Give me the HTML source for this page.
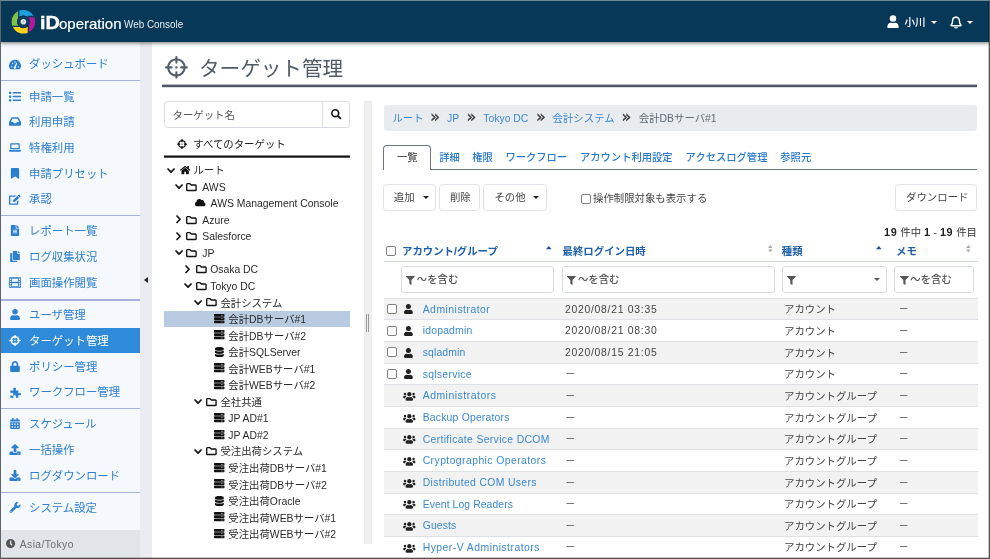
<!DOCTYPE html>
<html lang="ja">
<head>
<meta charset="utf-8">
<title>iDoperation Web Console</title>
<style>
*{box-sizing:border-box;margin:0;padding:0}
html,body{width:990px;height:559px;overflow:hidden;background:#fff}
body{position:relative;font-family:"Liberation Sans","Noto Sans CJK JP",sans-serif;font-size:10.4px;color:#333;will-change:transform}
.abs{position:absolute}
svg{display:block;overflow:visible}
/* frame */
#frame{position:absolute;left:0;top:0;width:990px;height:559px;border:1px solid #5e6468;border-top-color:#6f8795;border-bottom-color:#505050;border-right-color:#555;box-shadow:inset 0 -1px 0 rgba(0,0,0,.2),inset -1px 0 0 rgba(0,0,0,.22);z-index:50;pointer-events:none}
/* header */
#hdr{position:absolute;left:0;top:0;width:990px;height:42px;background:#073858;box-shadow:0 1px 4px rgba(0,0,0,.55);z-index:10;color:#fff}
#brand{position:absolute;left:39.800px;top:12px;font-size:17.700px;line-height:22px;color:#fff;white-space:nowrap;font-weight:bold;transform:scaleX(1.120);transform-origin:0 0;-webkit-text-stroke:.35px #fff}
#brand1{position:absolute;left:59px;top:13px;font-size:15px;line-height:22px;color:#fff;white-space:nowrap;-webkit-text-stroke:.2px #fff}
#brand2{position:absolute;left:124px;top:17.400px;font-size:10.800px;line-height:14px;color:#e6edf1;white-space:nowrap;transform:scaleX(.915);transform-origin:0 0}
.hname{position:absolute;left:904.500px;top:15px;font-size:10.600px;line-height:14px;color:#fff;font-weight:500;font-family:"Liberation Sans","Noto Sans CJK JP",sans-serif}
.caret{position:absolute;width:0;height:0;border-left:3.2px solid transparent;border-right:3.2px solid transparent;border-top:3.4px solid #fff}
/* sidebar */
#side{position:absolute;left:0;top:42px;width:140px;height:517px;background:#f5f8fd}
#split{position:absolute;left:140px;top:42px;width:12px;height:517px;background:#eaecf2}
.mi{position:absolute;left:0;width:140px;height:25.700px;line-height:25.200px;padding-top:1px;font-size:11.400px;color:#2f80d0;padding-left:29px;white-space:nowrap;font-family:"Liberation Sans","Noto Sans CJK JP",sans-serif;font-weight:400}
.mi svg{position:absolute;left:9px;top:7.3px;width:12px;height:11px;fill:#2b7fd0}
.mi.act{background:#2f8ad9;color:#fff}
.mi.act svg{fill:#fff}
.sep{position:absolute;left:0;width:140px;height:1.300px;background:#a9b0dc}
#tz{position:absolute;left:0;top:530px;width:140px;height:29px;background:#e1e4e9;color:#6c6c6c;font-size:10.300px;line-height:29px;padding-left:19.800px;letter-spacing:.42px}
#tz svg{position:absolute;left:6.200px;top:9.300px;width:9.200px;height:9.200px;fill:#555}

/* main */
#title{position:absolute;left:199px;top:52px;font-size:20.600px;line-height:34px;color:#505b66;white-space:nowrap;font-family:"Liberation Sans","Noto Sans CJK JP",sans-serif;font-weight:400}
#tline{position:absolute;left:161.600px;top:84px;width:815.400px;height:4px;background:linear-gradient(to bottom,rgba(78,89,101,.4) 0,rgba(78,89,101,.4) 25%,#4e5965 25%,#4e5965 75%,rgba(78,89,101,.22) 75%,rgba(78,89,101,.22) 100%)}
#sbox{position:absolute;left:163.500px;top:100.500px;width:186.500px;height:27px;border:1px solid #d9dde3;border-radius:3.500px;background:#fff}
#sbox .dv{position:absolute;left:157px;top:0;width:1px;height:25px;background:#dfe2e6}
#sbox .ph{position:absolute;left:8px;top:1px;line-height:25px;font-size:10.400px;color:#555;font-family:"Liberation Sans","Noto Sans CJK JP",sans-serif}
#allt{position:absolute;left:193.300px;top:135px;line-height:19px;font-size:10.400px;color:#222;white-space:nowrap;font-family:"Liberation Sans","Noto Sans CJK JP",sans-serif}
#bline{position:absolute;left:163.600px;top:155px;width:186.600px;height:3px;background:linear-gradient(#888 0,#888 33%,#111 33%,#111 67%,#555 67%,#555 100%)}
.tr{position:absolute;left:163.600px;width:186.400px;height:16.200px}
.tr.sel{background:#b9cbe0}
.tr span{position:absolute;top:1.500px;line-height:16px;font-size:10.400px;color:#2a2a2a;white-space:nowrap}
.tr svg{position:absolute;fill:#111}
.tr svg.ck{fill:none;stroke:#111;stroke-width:1.700;stroke-linecap:round;stroke-linejoin:round}
.tr svg.fk{fill:none;stroke:#111;stroke-width:1.350;stroke-linejoin:round}
#tsplit{position:absolute;left:364.400px;top:100.500px;width:7.800px;height:443.300px;background:#eeeeef}
#tsplit i{position:absolute;top:213px;width:1px;height:18px;background:#999}
/* right */
#bc{position:absolute;left:383.600px;top:104.800px;width:593.400px;height:26px;background:#e9ecef;border-radius:3px}
#bc span{position:absolute;top:0;line-height:28px;font-size:10.400px;white-space:nowrap;color:#3d88d0}
#bc span.g{color:#5f6871}
#bc span.q{color:#3a3a3a;font-size:16px;line-height:24px;font-weight:normal;font-family:"DejaVu Sans","Liberation Sans",sans-serif;margin-left:-.5px;-webkit-text-stroke:.3px #3a3a3a}
#tabline{position:absolute;left:383.500px;top:168.800px;width:593.500px;height:1px;background:#70777e}
#tab1{position:absolute;left:383.300px;top:145px;width:47.400px;height:25px;border:1px solid #70777e;border-bottom:0;border-radius:4px 4px 0 0;background:#fff}
.tb{position:absolute;top:147px;line-height:22px;font-size:10.300px;white-space:nowrap;color:#2a7acb;font-weight:500;font-family:"Liberation Sans","Noto Sans CJK JP",sans-serif}
.btn{position:absolute;top:184.300px;height:26.500px;border:1px solid #dfe2e8;border-radius:3.500px;background:#fff;font-size:10.400px;line-height:24px;color:#444;white-space:nowrap;font-family:"Liberation Sans","Noto Sans CJK JP",sans-serif}
.btn span{position:absolute;top:1px}
.cdk{position:absolute;width:0;height:0;border-left:3px solid transparent;border-right:3px solid transparent;border-top:3.200px solid #222}
.cb{position:absolute;width:10px;height:10px;border:1px solid #808080;border-radius:2px;background:#fff}
.t{position:absolute;white-space:nowrap}
#cnt{position:absolute;left:860px;width:117px;text-align:right;top:224px;line-height:17px;font-size:10.400px;color:#333;white-space:nowrap}
#cnt b{color:#222;font-size:10.800px;letter-spacing:.7px}
.th{position:absolute;top:243.300px;line-height:18px;font-size:10.400px;color:#1d5fa8;font-weight:bold;white-space:nowrap;font-family:"Liberation Sans","Noto Sans CJK JP",sans-serif}
#hline{position:absolute;left:383.500px;top:261px;width:594.500px;height:1px;background:#cfd6e6}
.fi{position:absolute;top:266.300px;height:26.700px;border:1px solid #d9dde2;border-radius:3px;background:#fff}
.fi svg{position:absolute;left:4.600px;top:8.300px;width:8.800px;height:9px;fill:#555}
.fi span{position:absolute;left:15.200px;top:1px;line-height:24px;font-size:10.400px;color:#555;font-weight:500;font-family:"Liberation Sans","Noto Sans CJK JP",sans-serif}
.row{position:absolute;left:383.500px;width:594.500px;height:21.650px;border-top:1px solid #dee2e6}
.row.o{background:#f2f2f2}
.row span{position:absolute;top:0;line-height:21px;font-size:10.400px;color:#444;white-space:nowrap}
.row span.lk{left:39.200px;color:#3b88d0;letter-spacing:.3px}
.row span.dt{left:181.500px;letter-spacing:.72px}
.row span.ds{left:181.500px;top:-.5px}
.row span.ty{left:400.500px;top:.5px;font-family:"Liberation Sans","Noto Sans CJK JP",sans-serif}
.row span.mm{left:515px;top:-.5px}
.row svg{position:absolute;fill:#222}
.row .cb{left:3.700px;top:5.400px}
</style>
</head>
<body>
<!-- HEADER -->
<div id="hdr">
  <svg class="abs" style="left:0;top:0;width:48px;height:42px" viewBox="0 0 48 42">
    <defs><clipPath id="ring"><path clip-rule="evenodd" d="M11.600 21.800a11.800 11.800 0 1 0 23.600 0a11.800 11.800 0 1 0 -23.600 0zM17 21.800a6.400 6.400 0 1 0 12.800 0a6.400 6.400 0 1 0 -12.800 0z"/></clipPath></defs>
    <g clip-path="url(#ring)">
      <rect x="10" y="8" width="8.400" height="18.300" fill="#7dc242"/>
      <rect x="18.400" y="8" width="20" height="8.600" fill="#1ea0e0"/>
      <rect x="28.600" y="16.600" width="10" height="20" fill="#b3189a"/>
      <rect x="10" y="26.300" width="18.600" height="10" fill="#fcd116"/>
    </g>
    <g stroke="#073858" stroke-width="1.300" fill="none">
      <path d="M18.700 8v10M28.400 26v10M28 16.500h10M10 26.400h10"/>
    </g>
    <circle cx="23.400" cy="21.800" r="6.300" fill="#073858"/><circle cx="23.400" cy="21.800" r="4.400" fill="none" stroke="#0b4162" stroke-width="1.800"/>
    <circle cx="23.400" cy="21.800" r="2.800" fill="#dde1e4"/>
    <circle cx="23.400" cy="21.800" r=".8" fill="#b0a8a8"/>
  </svg>
  <div id="brand">iD</div><div id="brand1">operation</div>
  <div id="brand2">Web Console</div>
  <svg class="abs" style="left:887px;top:15px;width:12px;height:13px" viewBox="0 0 14 16" fill="#fff"><circle cx="7" cy="4.2" r="4"/><path d="M0 15.2c0-3.6 1.8-5.6 4.2-5.6l.6 0c.7.3 1.400.5 2.200.5s1.500-.2 2.200-.5l.6 0c2.400 0 4.200 2 4.200 5.600c0 .5-.4.800-.9.800H.9c-.5 0-.9-.3-.9-.8z"/></svg>
  <div class="hname">小川</div>
  <div class="caret" style="left:931px;top:20.500px"></div>
  <svg class="abs" style="left:949.500px;top:14.500px;width:12px;height:14px" viewBox="0 0 14 16" fill="none" stroke="#fff" stroke-width="1.700"><path d="M7 1.300v1.200M7 2.500c-2.400 0-4 1.900-4 4.300c0 2.700-.7 3.700-1.700 4.700c-.3.300-.1.800.3.800h10.800c.4 0 .6-.5.300-.8c-1-1-1.700-2-1.700-4.700c0-2.400-1.600-4.300-4-4.300z"/><path d="M5.400 13.700c.2.800.8 1.300 1.600 1.300s1.400-.5 1.600-1.300" stroke-width="1.400"/></svg>
  <div class="caret" style="left:966.600px;top:20.500px"></div>
</div>

<!-- SIDEBAR -->
<div id="side"></div>
<div class="mi" style="top:51.300px"><svg viewBox="0 0 18 16"><path fill-rule="evenodd" d="M9 1a9 9 0 0 0-7.800 13.500c.2.300.5.500.9.500h13.800c.4 0 .7-.2.900-.5A9 9 0 0 0 9 1zm0 2.200a1 1 0 1 1 0 2a1 1 0 0 1 0-2zM4 12.500a1 1 0 1 1 0-2a1 1 0 0 1 0 2zm1.500-5a1 1 0 1 1 0-2a1 1 0 0 1 0 2zm6.800-1.300l-2 5.300a1.800 1.800 0 1 1-2.300-.5l2.900-5.300c.4-.7 1.700-.3 1.400.5zM14 12.500a1 1 0 1 1 0-2a1 1 0 0 1 0 2z"/></svg>ダッシュボード</div>
<div class="mi" style="top:83.6px"><svg viewBox="0 0 16 14"><rect x="0" y="0.500" width="3" height="3" rx=".5"/><rect x="0" y="5.500" width="3" height="3" rx=".5"/><rect x="0" y="10.500" width="3" height="3" rx=".5"/><rect x="5" y="1" width="11" height="2" rx=".5"/><rect x="5" y="6" width="11" height="2" rx=".5"/><rect x="5" y="11" width="11" height="2" rx=".5"/></svg>申請一覧</div>
<div class="mi" style="top:109.2px"><svg viewBox="0 0 18 14"><path d="M17.800 7.400L14.500 1.400C14.200.9 13.700.6 13.100.6H4.900c-.6 0-1.100.3-1.400.8L.2 7.400c-.1.300-.2.600-.2.900v3.600c0 .9.700 1.500 1.500 1.500h15c.8 0 1.500-.6 1.500-1.500V8.300c0-.3-.1-.6-.2-.9zM5.200 2.800h7.600l2.600 5h-3.700l-1 2H7.300l-1-2H2.600z"/></svg>利用申請</div>
<div class="mi" style="top:135.0px"><svg viewBox="0 0 20 16"><path d="M3.500 1h13c.8 0 1.500.7 1.500 1.500V11H2V2.500C2 1.700 2.700 1 3.500 1zM4 3v6h12V3zM0 12h20v.8c0 1.200-1 2.200-2.200 2.200H2.200C1 15 0 14 0 12.800z"/></svg>特権利用</div>
<div class="mi" style="top:160.7px"><svg viewBox="0 0 12 16"><path d="M0 16V1.500C0 .7.700 0 1.500 0h9c.8 0 1.500.7 1.500 1.500V16l-6-3.500z"/></svg>申請プリセット</div>
<div class="mi" style="top:186.3px"><svg viewBox="0 0 18 16"><path d="M12.600 2.600l2.800 2.800-6.100 6.100-2.500.3c-.3 0-.6-.3-.6-.6l.3-2.500zM17.100 2.200L15.800.9c-.4-.4-1.100-.4-1.500 0l-1.200 1.200 2.800 2.800 1.200-1.200c.4-.4.400-1.100 0-1.500zM12 10.800v3.200H2V4h7.200l2-2H1.500C.7 2 0 2.700 0 3.500v11c0 .8.700 1.500 1.500 1.500h11c.8 0 1.500-.7 1.500-1.500V8.800z"/></svg>承認</div>
<div class="mi" style="top:218.2px"><svg viewBox="0 0 12 16"><path fill-rule="evenodd" d="M7 4.300V0H.8C.3 0 0 .3 0 .8v14.500c0 .4.300.7.800.7h10.500c.4 0 .7-.3.700-.7V5H7.800C7.300 5 7 4.700 7 4.300zM9 11.600c0 .2-.2.400-.4.400H3.400c-.2 0-.4-.2-.4-.4v-.2c0-.2.200-.4.400-.4h5.200c.2 0 .4.200.4.400zm0-2c0 .2-.2.400-.4.400H3.400C3.200 10 3 9.800 3 9.600v-.2c0-.2.200-.4.400-.4h5.200c.2 0 .4.200.4.400zm0-2.200v.2c0 .2-.2.400-.4.400H3.400C3.200 8 3 7.800 3 7.600v-.2c0-.2.200-.4.400-.4h5.200c.2 0 .4.200.4.400zM12 3.800V4H8V0h.2c.2 0 .4.100.5.200l3.100 3.100c.1.100.2.300.2.500z"/></svg>レポート一覧</div>
<div class="mi" style="top:243.8px"><svg viewBox="0 0 14 16"><path d="M10 14v1.200c0 .4-.3.800-.8.800H.8c-.5 0-.8-.4-.8-.8V3.800C0 3.300.3 3 .8 3H3v9.200c0 1 .8 1.800 1.800 1.800zM10 3.200V0H4.800C4.300 0 4 .3 4 .8v11.500c0 .4.300.7.800.7h8.500c.4 0 .7-.3.700-.7V4h-3.200c-.5 0-.8-.4-.8-.8zM13.800 2.300L11.700.2C11.600.1 11.400 0 11.200 0H11v3h3v-.2c0-.2-.1-.4-.2-.5z"/></svg>ログ収集状況</div>
<div class="mi" style="top:269.5px"><svg viewBox="0 0 16 14"><path fill-rule="evenodd" d="M15.200 0H.8C.3 0 0 .3 0 .8v12.500c0 .4.300.7.800.7h14.500c.4 0 .7-.3.700-.7V.8c0-.5-.3-.8-.8-.8zM3 12.100c0 .2-.2.400-.4.400H1.400c-.2 0-.4-.2-.4-.4v-1.200c0-.2.200-.4.400-.4h1.200c.2 0 .4.200.4.400zm0-3c0 .2-.2.400-.4.400H1.400c-.2 0-.4-.2-.4-.4V7.900c0-.2.200-.4.400-.4h1.200c.2 0 .4.200.4.400zm0-3c0 .2-.2.400-.4.400H1.400c-.2 0-.4-.2-.4-.4V4.900c0-.2.200-.4.400-.4h1.200c.2 0 .4.200.4.400zm0-3c0 .2-.2.400-.4.400H1.400c-.2 0-.4-.2-.4-.4V1.900c0-.2.200-.4.400-.4h1.200c.2 0 .4.200.4.400zm9 8.500c0 .2-.2.400-.4.400H4.400c-.2 0-.4-.2-.4-.4V8.400C4 8.200 4.200 8 4.400 8h7.200c.2 0 .4.200.4.400zm0-6c0 .2-.2.400-.4.400H4.400C4.200 6 4 5.800 4 5.600V2.400c0-.2.200-.4.400-.4h7.200c.2 0 .4.200.4.400zm3 6.500c0 .2-.2.400-.4.400h-1.200c-.2 0-.4-.2-.4-.4v-1.200c0-.2.200-.4.400-.4h1.200c.2 0 .4.200.4.400zm0-3c0 .2-.2.400-.4.400h-1.200c-.2 0-.4-.2-.4-.4V7.900c0-.2.200-.4.400-.4h1.200c.2 0 .4.200.4.400zm0-3c0 .2-.2.400-.4.400h-1.200c-.2 0-.4-.2-.4-.4V4.900c0-.2.200-.4.400-.4h1.200c.2 0 .4.200.4.400zm0-3c0 .2-.2.400-.4.400h-1.200c-.2 0-.4-.2-.4-.4V1.900c0-.2.200-.4.400-.4h1.200c.2 0 .4.200.4.400z"/></svg>画面操作閲覧</div>
<div class="mi" style="top:301.5px"><svg viewBox="0 0 14 16"><circle cx="7" cy="4" r="4"/><path d="M9.800 9h-.5c-.7.300-1.500.5-2.300.5S5.400 9.300 4.700 9h-.5C1.900 9 0 10.900 0 13.200v1.300c0 .8.700 1.500 1.500 1.500h11c.8 0 1.500-.7 1.500-1.500v-1.300C14 10.900 12.100 9 9.800 9z"/></svg>ユーザ管理</div>
<div class="mi act" style="top:327.8px"><svg viewBox="0 0 16 16"><path fill-rule="evenodd" d="M15.600 7H14.400A6.500 6.500 0 0 0 9 1.600V.4C9 .2 8.800 0 8.600 0H7.400C7.200 0 7 .2 7 .4v1.200A6.500 6.500 0 0 0 1.600 7H.4C.2 7 0 7.200 0 7.400v1.200c0 .2.200.4.400.4h1.200A6.500 6.500 0 0 0 7 14.400v1.200c0 .2.200.4.400.4h1.200c.2 0 .4-.2.400-.4v-1.200A6.500 6.500 0 0 0 14.400 9h1.200c.2 0 .4-.2.400-.4V7.400c0-.2-.2-.4-.4-.4zM9 12.400v-1c0-.2-.2-.4-.4-.4H7.400c-.2 0-.4.200-.4.400v1A4.500 4.500 0 0 1 3.600 9h1c.2 0 .4-.2.400-.4V7.400C5 7.200 4.800 7 4.600 7h-1A4.500 4.500 0 0 1 7 3.600v1c0 .2.200.4.400.4h1.200c.2 0 .4-.2.400-.4v-1A4.500 4.500 0 0 1 12.400 7h-1c-.2 0-.4.200-.4.400v1.200c0 .2.200.4.400.4h1A4.500 4.500 0 0 1 9 12.400zM9 8a1 1 0 1 1-2 0a1 1 0 0 1 2 0z"/></svg>ターゲット管理</div>
<div class="mi" style="top:353.5px"><svg viewBox="0 0 14 16"><path fill-rule="evenodd" d="M12.500 7h-.8V4.800C11.700 2.100 9.600 0 7 0S2.200 2.100 2.200 4.800V7h-.7C.7 7 0 7.700 0 8.500v6c0 .8.700 1.500 1.500 1.500h11c.8 0 1.500-.7 1.500-1.500v-6c0-.8-.7-1.500-1.500-1.500zM9.200 7H4.800V4.800c0-1.300 1-2.300 2.200-2.300s2.200 1 2.200 2.300z"/></svg>ポリシー管理</div>
<div class="mi" style="top:379.3px"><svg viewBox="0 0 18 16"><path d="M16.200 8.700c-.6 0-1 .6-1.700.6-.3 0-.5-.2-.5-.5V5H10.500c-.3 0-.5-.2-.5-.5 0-.7.700-1 .7-1.800C10.700 1.500 9.700.7 8.500.7S6.200 1.500 6.200 2.700c0 .8.800 1.100.8 1.800 0 .3-.2.500-.5.500H2v3.300c0 .4.300.7.700.7.700 0 1-.8 1.900-.8C5.800 8.200 6.500 9.300 6.500 10.500s-.7 2.300-1.900 2.300c-.9 0-1.200-.8-1.900-.8-.4 0-.7.300-.7.700V16h4.500c.3 0 .5-.2.500-.5 0-.6-.7-.9-.7-1.700 0-1.100 1-1.800 2.200-1.800s2.200.7 2.200 1.800c0 .8-.7 1.100-.7 1.700 0 .3.200.5.500.5H14v-3.900c0-.3.200-.5.500-.5.700 0 1.100.7 1.800.7 1 0 1.700-.9 1.700-2S17.200 8.700 16.200 8.700z"/></svg>ワークフロー管理</div>
<div class="mi" style="top:410.9px"><svg viewBox="0 0 14 16"><path fill-rule="evenodd" d="M0 14.500c0 .8.700 1.500 1.500 1.500h11c.8 0 1.500-.7 1.500-1.500V6H0zm10-6.100c0-.2.200-.4.400-.4h1.200c.2 0 .4.200.4.400v1.200c0 .2-.2.400-.4.400h-1.200c-.2 0-.4-.2-.4-.4zm0 4c0-.2.200-.4.400-.4h1.200c.2 0 .4.200.4.400v1.200c0 .2-.2.400-.4.400h-1.200c-.2 0-.4-.2-.4-.4zm-4-4c0-.2.200-.4.400-.4h1.200c.2 0 .4.200.4.400v1.200c0 .2-.2.400-.4.400H6.400c-.2 0-.4-.2-.4-.4zm0 4c0-.2.200-.4.400-.4h1.200c.2 0 .4.200.4.400v1.200c0 .2-.2.400-.4.400H6.400c-.2 0-.4-.2-.4-.4zm-4-4c0-.2.200-.4.400-.4h1.200c.2 0 .4.200.4.400v1.200c0 .2-.2.400-.4.400H2.400c-.2 0-.4-.2-.4-.4zm0 4c0-.2.200-.4.400-.4h1.200c.2 0 .4.200.4.400v1.200c0 .2-.2.400-.4.400H2.400c-.2 0-.4-.2-.4-.4zM12.500 2H11V.5c0-.3-.2-.5-.5-.5h-1C9.200 0 9 .2 9 .5V2H5V.5C5 .2 4.800 0 4.500 0h-1C3.200 0 3 .2 3 .5V2H1.500C.7 2 0 2.700 0 3.500V5h14V3.500c0-.8-.7-1.500-1.500-1.500z"/></svg>スケジュール</div>
<div class="mi" style="top:436.8px"><svg viewBox="0 0 16 16"><path d="M9.200 12H6.800c-.5 0-.8-.3-.8-.8V6H3.300c-.6 0-.9-.7-.5-1.100L7.500.2c.3-.3.700-.3 1 0l4.700 4.700c.4.400.1 1.100-.5 1.100H10v5.200c0 .5-.3.800-.8.800zM16 11.800v3.500c0 .4-.3.700-.7.700H.8c-.5 0-.8-.3-.8-.7v-3.500c0-.5.300-.8.800-.8H5v.2C5 12.200 5.800 13 6.800 13h2.500c1 0 1.700-.8 1.700-1.800V11h4.300c.4 0 .7.300.7.800zM12.100 14.500a.6.600 0 1 0-1.200 0a.6.600 0 0 0 1.200 0zm2 0a.6.600 0 1 0-1.200 0a.6.600 0 0 0 1.200 0z"/></svg>一括操作</div>
<div class="mi" style="top:462.5px"><svg viewBox="0 0 16 16"><path d="M6.800 0h2.400c.5 0 .8.300.8.800V6h2.700c.6 0 .9.700.5 1.100L8.500 11.800c-.3.300-.7.300-1 0L2.800 7.100C2.400 6.700 2.700 6 3.300 6H6V.8C6 .3 6.300 0 6.800 0zM16 11.800v3.500c0 .4-.3.700-.7.700H.8c-.5 0-.8-.3-.8-.7v-3.500c0-.5.300-.8.800-.8h4.600l1.500 1.500c.6.700 1.600.7 2.200 0L10.600 11h4.700c.4 0 .7.300.7.800zM12.100 14.500a.6.600 0 1 0-1.200 0a.6.600 0 0 0 1.200 0zm2 0a.6.600 0 1 0-1.200 0a.6.600 0 0 0 1.200 0z"/></svg>ログダウンロード</div>
<div class="mi" style="top:494.8px"><svg viewBox="0 0 16 16"><path fill-rule="evenodd" d="M15.900 3.500c-.1-.3-.4-.4-.6-.2l-2.300 2.300-2.100-.4-.4-2.100L12.800.8c.2-.2.100-.6-.2-.6C11.100-.2 9.500.2 8.300 1.400 7.100 2.600 6.700 4.400 7.200 6L.6 12.600c-.8.800-.8 2 0 2.800s2 .8 2.800 0L10 8.800c1.600.5 3.400.1 4.700-1.100 1.200-1.200 1.600-2.800 1.200-4.200zM2 14.800a.8.800 0 1 1 0-1.600a.8.800 0 0 1 0 1.600z"/></svg>システム設定</div>
<div class="sep" style="top:79.5px"></div>
<div class="sep" style="top:215.0px"></div>
<div class="sep" style="top:299.3px"></div>
<div class="sep" style="top:408.0px"></div>
<div class="sep" style="top:492.0px"></div>
<div id="tz"><svg viewBox="0 0 16 16"><path fill-rule="evenodd" d="M8 0a8 8 0 1 0 0 16A8 8 0 0 0 8 0zm1.800 11.300L7 9.200c-.1-.1-.2-.2-.2-.3V3.500c0-.2.200-.4.400-.4h1.600c.2 0 .4.200.4.400v4.400l2.100 1.500c.2.100.2.400.1.600l-.9 1.200c-.2.200-.4.200-.7.100z"/></svg>Asia/Tokyo</div>
<div id="split"><div class="abs" style="left:4px;top:235px;width:0;height:0;border-top:3px solid transparent;border-bottom:3px solid transparent;border-right:4px solid #222"></div></div>

<svg class="abs" style="left:164.600px;top:56.200px;width:22.800px;height:22.800px" viewBox="0 0 22.800 22.800" fill="none" stroke="#525d68" stroke-width="2.100" stroke-linecap="round"><circle cx="11.400" cy="11.400" r="8.200"/><path d="M11.400 1v5.600M11.400 21.800v-5.600M1 11.400h5.600M21.800 11.400h-5.600"/><circle cx="11.400" cy="11.400" r="1.200" fill="#525d68" stroke="none"/></svg>
<div id="title">ターゲット管理</div>
<div id="tline"></div>
<div id="sbox"><div class="ph">ターゲット名</div><div class="dv"></div><svg class="abs" style="left:166.800px;top:7.600px;width:10.400px;height:10.400px;fill:#111" viewBox="0 0 16 16"><path d="M15.800 13.800l-3.100-3.100c-.1-.1-.3-.2-.5-.2h-.5a6.500 6.500 0 1 0-1.100 1.100v.5c0 .2.100.4.200.5l3.100 3.100c.3.300.8.300 1.100 0l.9-.9c.2-.3.200-.7-.1-1zM6.500 10.500a4 4 0 1 1 0-8a4 4 0 0 1 0 8z"/></svg></div>
<svg class="abs" style="left:176.600px;top:138.700px;width:10px;height:10px;fill:#111" viewBox="0 0 16 16"><path fill-rule="evenodd" d="M15.600 7H14.400A6.500 6.500 0 0 0 9 1.600V.4C9 .2 8.800 0 8.600 0H7.400C7.200 0 7 .2 7 .4v1.200A6.500 6.500 0 0 0 1.600 7H.4C.2 7 0 7.200 0 7.400v1.200c0 .2.200.4.400.4h1.200A6.500 6.500 0 0 0 7 14.400v1.200c0 .2.200.4.400.4h1.200c.2 0 .4-.2.400-.4v-1.200A6.500 6.500 0 0 0 14.400 9h1.200c.2 0 .4-.2.400-.4V7.400c0-.2-.2-.4-.4-.4zM9 12.400v-1c0-.2-.2-.4-.4-.4H7.400c-.2 0-.4.200-.4.400v1A4.500 4.500 0 0 1 3.600 9h1c.2 0 .4-.2.400-.4V7.400C5 7.200 4.800 7 4.600 7h-1A4.500 4.500 0 0 1 7 3.600v1c0 .2.200.4.400.4h1.200c.2 0 .4-.2.400-.4v-1A4.500 4.500 0 0 1 12.400 7h-1c-.2 0-.4.200-.4.400v1.200c0 .2.200.4.400.4h1A4.500 4.500 0 0 1 9 12.400zM9 8a1 1 0 1 1-2 0a1 1 0 0 1 2 0z"/></svg>
<div id="allt">すべてのターゲット</div>
<div id="bline"></div>
<div class="tr" style="top:161.60px"><svg style="left:3.0px;top:6px;width:8.100px;height:5.300px" viewBox="0 0 8.100 5.300" class="ck"><path d="M1 1L4.050 4.200L7.100 1"/></svg><svg style="left:16.1px;top:4.400px;width:10.300px;height:8.300px" viewBox="0 .8 18 14.500"><path d="M9 3.800L2.600 9.100v5.700c0 .3.200.5.500.5h3.900c.3 0 .5-.2.500-.5v-3.300c0-.3.200-.5.500-.5h2c.3 0 .5.200.5.500v3.300c0 .3.200.5.500.5h3.900c.3 0 .5-.2.500-.5V9.100L9.300 3.800c-.1-.1-.2-.1-.3 0zM17.800 7.400l-2.300-1.900V1.400c0-.2-.2-.4-.4-.4h-1.900c-.2 0-.4.200-.4.400v2L10.200 1.200c-.7-.6-1.700-.6-2.400 0L.2 7.400c-.2.100-.2.400-.1.600l.9 1c.1.200.4.200.6.100L9 2.900c.1-.1.300-.1.400 0l7.400 6.200c.2.100.4.100.6-.1l.9-1c.1-.2.100-.5-.1-.6z"/></svg><span style="left:29.9px">ルート</span></div>
<div class="tr" style="top:178.15px"><svg style="left:11.1px;top:6px;width:8.100px;height:5.300px" viewBox="0 0 8.100 5.300" class="ck"><path d="M1 1L4.050 4.200L7.100 1"/></svg><svg style="left:22.4px;top:4.400px;width:10.800px;height:8.200px" viewBox="0 0 10.800 8.200" class="fk"><path d="M.7 1.300a.6.600 0 0 1 .6-.6h2.700l1.300 1.300h4.200a.6.600 0 0 1 .6.600v4.300a.6.600 0 0 1-.6.600H1.300a.6.600 0 0 1-.6-.6z"/></svg><span style="left:38.7px">AWS</span></div>
<div class="tr" style="top:194.70px"><svg style="left:31.2px;top:4.400px;width:10.500px;height:7.400px" viewBox="0 1.500 20 14"><path d="M16.800 7.600c.1-.3.200-.7.200-1.100C17 4.800 15.700 3.500 14 3.500c-.6 0-1.200.2-1.700.5C11.500 2.500 9.900 1.500 8 1.500c-2.800 0-5 2.200-5 5v.2A4.500 4.500 0 0 0 4.500 15.500H16c2.200 0 4-1.800 4-4 0-1.900-1.400-3.500-3.200-3.900z"/></svg><span style="left:47.0px">AWS Management Console</span></div>
<div class="tr" style="top:211.25px"><svg style="left:12.4px;top:3.900px;width:5.200px;height:8.500px" viewBox="0 0 5.200 8.500" class="ck"><path d="M1 1L4.100 4.250L1 7.500"/></svg><svg style="left:22.4px;top:4.400px;width:10.800px;height:8.200px" viewBox="0 0 10.800 8.200" class="fk"><path d="M.7 1.300a.6.600 0 0 1 .6-.6h2.700l1.300 1.300h4.200a.6.600 0 0 1 .6.600v4.300a.6.600 0 0 1-.6.600H1.300a.6.600 0 0 1-.6-.6z"/></svg><span style="left:38.7px">Azure</span></div>
<div class="tr" style="top:227.80px"><svg style="left:12.4px;top:3.900px;width:5.200px;height:8.500px" viewBox="0 0 5.200 8.500" class="ck"><path d="M1 1L4.100 4.250L1 7.500"/></svg><svg style="left:22.4px;top:4.400px;width:10.800px;height:8.200px" viewBox="0 0 10.800 8.200" class="fk"><path d="M.7 1.300a.6.600 0 0 1 .6-.6h2.700l1.300 1.300h4.200a.6.600 0 0 1 .6.600v4.300a.6.600 0 0 1-.6.600H1.300a.6.600 0 0 1-.6-.6z"/></svg><span style="left:38.7px">Salesforce</span></div>
<div class="tr" style="top:244.35px"><svg style="left:11.1px;top:6px;width:8.100px;height:5.300px" viewBox="0 0 8.100 5.300" class="ck"><path d="M1 1L4.050 4.200L7.100 1"/></svg><svg style="left:22.4px;top:4.400px;width:10.800px;height:8.200px" viewBox="0 0 10.800 8.200" class="fk"><path d="M.7 1.300a.6.600 0 0 1 .6-.6h2.700l1.300 1.300h4.200a.6.600 0 0 1 .6.600v4.300a.6.600 0 0 1-.6.600H1.300a.6.600 0 0 1-.6-.6z"/></svg><span style="left:38.7px">JP</span></div>
<div class="tr" style="top:260.90px"><svg style="left:21.3px;top:3.900px;width:5.200px;height:8.500px" viewBox="0 0 5.200 8.500" class="ck"><path d="M1 1L4.100 4.250L1 7.500"/></svg><svg style="left:32.1px;top:4.400px;width:10.800px;height:8.200px" viewBox="0 0 10.800 8.200" class="fk"><path d="M.7 1.300a.6.600 0 0 1 .6-.6h2.700l1.300 1.300h4.200a.6.600 0 0 1 .6.600v4.300a.6.600 0 0 1-.6.600H1.300a.6.600 0 0 1-.6-.6z"/></svg><span style="left:46.6px">Osaka DC</span></div>
<div class="tr" style="top:277.45px"><svg style="left:20.0px;top:6px;width:8.100px;height:5.300px" viewBox="0 0 8.100 5.300" class="ck"><path d="M1 1L4.050 4.200L7.100 1"/></svg><svg style="left:32.1px;top:4.400px;width:10.800px;height:8.200px" viewBox="0 0 10.800 8.200" class="fk"><path d="M.7 1.300a.6.600 0 0 1 .6-.6h2.700l1.300 1.300h4.200a.6.600 0 0 1 .6.600v4.300a.6.600 0 0 1-.6.600H1.300a.6.600 0 0 1-.6-.6z"/></svg><span style="left:46.6px">Tokyo DC</span></div>
<div class="tr" style="top:294.00px"><svg style="left:30.3px;top:6px;width:8.100px;height:5.300px" viewBox="0 0 8.100 5.300" class="ck"><path d="M1 1L4.050 4.200L7.100 1"/></svg><svg style="left:42.4px;top:4.400px;width:10.800px;height:8.200px" viewBox="0 0 10.800 8.200" class="fk"><path d="M.7 1.300a.6.600 0 0 1 .6-.6h2.700l1.300 1.300h4.200a.6.600 0 0 1 .6.600v4.300a.6.600 0 0 1-.6.600H1.300a.6.600 0 0 1-.6-.6z"/></svg><span style="left:56.8px">会計システム</span></div>
<div class="tr sel" style="top:310.55px"><svg style="left:50.9px;top:3.300px;width:10.500px;height:9.200px" viewBox="0 1 16 14"><path fill-rule="evenodd" d="M15 5H1C.4 5 0 4.600 0 4V2c0-.6.400-1 1-1h14c.6 0 1 .4 1 1v2c0 .6-.4 1-1 1zM13.500 2.300a.7.700 0 1 0 0 1.400a.7.700 0 0 0 0-1.400zm-2 0a.7.700 0 1 0 0 1.400a.7.700 0 0 0 0-1.400zM15 10H1c-.6 0-1-.4-1-1V7c0-.6.400-1 1-1h14c.6 0 1 .4 1 1v2c0 .6-.4 1-1 1zM13.500 7.300a.7.700 0 1 0 0 1.400a.7.700 0 0 0 0-1.400zm-2 0a.7.700 0 1 0 0 1.400a.7.700 0 0 0 0-1.400zM15 15H1c-.6 0-1-.4-1-1v-2c0-.6.400-1 1-1h14c.6 0 1 .4 1 1v2c0 .6-.4 1-1 1zM13.500 12.300a.7.700 0 1 0 0 1.400a.7.700 0 0 0 0-1.400zm-2 0a.7.700 0 1 0 0 1.400a.7.700 0 0 0 0-1.400z"/></svg><span style="left:64.7px">会計DBサーバ#1</span></div>
<div class="tr" style="top:327.10px"><svg style="left:50.9px;top:3.300px;width:10.500px;height:9.200px" viewBox="0 1 16 14"><path fill-rule="evenodd" d="M15 5H1C.4 5 0 4.600 0 4V2c0-.6.400-1 1-1h14c.6 0 1 .4 1 1v2c0 .6-.4 1-1 1zM13.500 2.300a.7.700 0 1 0 0 1.400a.7.700 0 0 0 0-1.400zm-2 0a.7.700 0 1 0 0 1.400a.7.700 0 0 0 0-1.400zM15 10H1c-.6 0-1-.4-1-1V7c0-.6.400-1 1-1h14c.6 0 1 .4 1 1v2c0 .6-.4 1-1 1zM13.500 7.300a.7.700 0 1 0 0 1.400a.7.700 0 0 0 0-1.400zm-2 0a.7.700 0 1 0 0 1.400a.7.700 0 0 0 0-1.400zM15 15H1c-.6 0-1-.4-1-1v-2c0-.6.400-1 1-1h14c.6 0 1 .4 1 1v2c0 .6-.4 1-1 1zM13.500 12.300a.7.700 0 1 0 0 1.400a.7.700 0 0 0 0-1.400zm-2 0a.7.700 0 1 0 0 1.400a.7.700 0 0 0 0-1.400z"/></svg><span style="left:64.7px">会計DBサーバ#2</span></div>
<div class="tr" style="top:343.65px"><svg style="left:51.7px;top:3.2px;width:8.8px;height:10.2px" viewBox="0 0 14 16"><path d="M14 2.300v1.400C14 5 10.900 6 7 6S0 5 0 3.700V2.300C0 1 3.100 0 7 0s7 1 7 2.300zM14 5.500v3.200C14 10 10.900 11 7 11S0 10 0 8.700V5.500C1.500 6.500 4.300 7 7 7s5.500-.5 7-1.500zM14 10.500v3.200C14 15 10.900 16 7 16S0 15 0 13.700v-3.200c1.500 1 4.300 1.500 7 1.500s5.500-.5 7-1.500z"/></svg><span style="left:64.7px">会計SQLServer</span></div>
<div class="tr" style="top:360.20px"><svg style="left:50.9px;top:3.300px;width:10.500px;height:9.200px" viewBox="0 1 16 14"><path fill-rule="evenodd" d="M15 5H1C.4 5 0 4.600 0 4V2c0-.6.400-1 1-1h14c.6 0 1 .4 1 1v2c0 .6-.4 1-1 1zM13.500 2.300a.7.700 0 1 0 0 1.400a.7.700 0 0 0 0-1.400zm-2 0a.7.700 0 1 0 0 1.400a.7.700 0 0 0 0-1.400zM15 10H1c-.6 0-1-.4-1-1V7c0-.6.400-1 1-1h14c.6 0 1 .4 1 1v2c0 .6-.4 1-1 1zM13.500 7.300a.7.700 0 1 0 0 1.400a.7.700 0 0 0 0-1.400zm-2 0a.7.700 0 1 0 0 1.400a.7.700 0 0 0 0-1.400zM15 15H1c-.6 0-1-.4-1-1v-2c0-.6.400-1 1-1h14c.6 0 1 .4 1 1v2c0 .6-.4 1-1 1zM13.500 12.300a.7.700 0 1 0 0 1.400a.7.700 0 0 0 0-1.400zm-2 0a.7.700 0 1 0 0 1.400a.7.700 0 0 0 0-1.400z"/></svg><span style="left:64.7px">会計WEBサーバ#1</span></div>
<div class="tr" style="top:376.75px"><svg style="left:50.9px;top:3.300px;width:10.500px;height:9.200px" viewBox="0 1 16 14"><path fill-rule="evenodd" d="M15 5H1C.4 5 0 4.600 0 4V2c0-.6.400-1 1-1h14c.6 0 1 .4 1 1v2c0 .6-.4 1-1 1zM13.500 2.300a.7.700 0 1 0 0 1.400a.7.700 0 0 0 0-1.400zm-2 0a.7.700 0 1 0 0 1.400a.7.700 0 0 0 0-1.400zM15 10H1c-.6 0-1-.4-1-1V7c0-.6.400-1 1-1h14c.6 0 1 .4 1 1v2c0 .6-.4 1-1 1zM13.500 7.300a.7.700 0 1 0 0 1.400a.7.700 0 0 0 0-1.400zm-2 0a.7.700 0 1 0 0 1.400a.7.700 0 0 0 0-1.400zM15 15H1c-.6 0-1-.4-1-1v-2c0-.6.400-1 1-1h14c.6 0 1 .4 1 1v2c0 .6-.4 1-1 1zM13.500 12.300a.7.700 0 1 0 0 1.400a.7.700 0 0 0 0-1.400zm-2 0a.7.700 0 1 0 0 1.400a.7.700 0 0 0 0-1.400z"/></svg><span style="left:64.7px">会計WEBサーバ#2</span></div>
<div class="tr" style="top:393.30px"><svg style="left:30.3px;top:6px;width:8.100px;height:5.300px" viewBox="0 0 8.100 5.300" class="ck"><path d="M1 1L4.050 4.200L7.100 1"/></svg><svg style="left:42.4px;top:4.400px;width:10.800px;height:8.200px" viewBox="0 0 10.800 8.200" class="fk"><path d="M.7 1.300a.6.600 0 0 1 .6-.6h2.700l1.300 1.300h4.200a.6.600 0 0 1 .6.600v4.300a.6.600 0 0 1-.6.600H1.300a.6.600 0 0 1-.6-.6z"/></svg><span style="left:56.8px">全社共通</span></div>
<div class="tr" style="top:409.85px"><svg style="left:50.9px;top:3.300px;width:10.500px;height:9.200px" viewBox="0 1 16 14"><path fill-rule="evenodd" d="M15 5H1C.4 5 0 4.600 0 4V2c0-.6.400-1 1-1h14c.6 0 1 .4 1 1v2c0 .6-.4 1-1 1zM13.500 2.300a.7.700 0 1 0 0 1.400a.7.700 0 0 0 0-1.400zm-2 0a.7.700 0 1 0 0 1.400a.7.700 0 0 0 0-1.400zM15 10H1c-.6 0-1-.4-1-1V7c0-.6.400-1 1-1h14c.6 0 1 .4 1 1v2c0 .6-.4 1-1 1zM13.500 7.300a.7.700 0 1 0 0 1.400a.7.700 0 0 0 0-1.400zm-2 0a.7.700 0 1 0 0 1.400a.7.700 0 0 0 0-1.400zM15 15H1c-.6 0-1-.4-1-1v-2c0-.6.400-1 1-1h14c.6 0 1 .4 1 1v2c0 .6-.4 1-1 1zM13.500 12.300a.7.700 0 1 0 0 1.400a.7.700 0 0 0 0-1.400zm-2 0a.7.700 0 1 0 0 1.400a.7.700 0 0 0 0-1.400z"/></svg><span style="left:64.7px">JP AD#1</span></div>
<div class="tr" style="top:426.40px"><svg style="left:50.9px;top:3.300px;width:10.500px;height:9.200px" viewBox="0 1 16 14"><path fill-rule="evenodd" d="M15 5H1C.4 5 0 4.600 0 4V2c0-.6.400-1 1-1h14c.6 0 1 .4 1 1v2c0 .6-.4 1-1 1zM13.500 2.300a.7.700 0 1 0 0 1.400a.7.700 0 0 0 0-1.400zm-2 0a.7.700 0 1 0 0 1.400a.7.700 0 0 0 0-1.400zM15 10H1c-.6 0-1-.4-1-1V7c0-.6.400-1 1-1h14c.6 0 1 .4 1 1v2c0 .6-.4 1-1 1zM13.500 7.300a.7.700 0 1 0 0 1.400a.7.700 0 0 0 0-1.400zm-2 0a.7.700 0 1 0 0 1.400a.7.700 0 0 0 0-1.400zM15 15H1c-.6 0-1-.4-1-1v-2c0-.6.400-1 1-1h14c.6 0 1 .4 1 1v2c0 .6-.4 1-1 1zM13.500 12.300a.7.700 0 1 0 0 1.400a.7.700 0 0 0 0-1.400zm-2 0a.7.700 0 1 0 0 1.400a.7.700 0 0 0 0-1.400z"/></svg><span style="left:64.7px">JP AD#2</span></div>
<div class="tr" style="top:442.95px"><svg style="left:30.3px;top:6px;width:8.100px;height:5.300px" viewBox="0 0 8.100 5.300" class="ck"><path d="M1 1L4.050 4.200L7.100 1"/></svg><svg style="left:42.4px;top:4.400px;width:10.800px;height:8.200px" viewBox="0 0 10.800 8.200" class="fk"><path d="M.7 1.300a.6.600 0 0 1 .6-.6h2.700l1.300 1.300h4.200a.6.600 0 0 1 .6.600v4.300a.6.600 0 0 1-.6.600H1.300a.6.600 0 0 1-.6-.6z"/></svg><span style="left:56.8px">受注出荷システム</span></div>
<div class="tr" style="top:459.50px"><svg style="left:50.9px;top:3.300px;width:10.500px;height:9.200px" viewBox="0 1 16 14"><path fill-rule="evenodd" d="M15 5H1C.4 5 0 4.600 0 4V2c0-.6.400-1 1-1h14c.6 0 1 .4 1 1v2c0 .6-.4 1-1 1zM13.500 2.300a.7.700 0 1 0 0 1.400a.7.700 0 0 0 0-1.400zm-2 0a.7.700 0 1 0 0 1.400a.7.700 0 0 0 0-1.400zM15 10H1c-.6 0-1-.4-1-1V7c0-.6.400-1 1-1h14c.6 0 1 .4 1 1v2c0 .6-.4 1-1 1zM13.500 7.300a.7.700 0 1 0 0 1.400a.7.700 0 0 0 0-1.400zm-2 0a.7.700 0 1 0 0 1.400a.7.700 0 0 0 0-1.400zM15 15H1c-.6 0-1-.4-1-1v-2c0-.6.400-1 1-1h14c.6 0 1 .4 1 1v2c0 .6-.4 1-1 1zM13.500 12.300a.7.700 0 1 0 0 1.400a.7.700 0 0 0 0-1.400zm-2 0a.7.700 0 1 0 0 1.400a.7.700 0 0 0 0-1.400z"/></svg><span style="left:64.7px">受注出荷DBサーバ#1</span></div>
<div class="tr" style="top:476.05px"><svg style="left:50.9px;top:3.300px;width:10.500px;height:9.200px" viewBox="0 1 16 14"><path fill-rule="evenodd" d="M15 5H1C.4 5 0 4.600 0 4V2c0-.6.400-1 1-1h14c.6 0 1 .4 1 1v2c0 .6-.4 1-1 1zM13.500 2.300a.7.700 0 1 0 0 1.400a.7.700 0 0 0 0-1.400zm-2 0a.7.700 0 1 0 0 1.400a.7.700 0 0 0 0-1.400zM15 10H1c-.6 0-1-.4-1-1V7c0-.6.400-1 1-1h14c.6 0 1 .4 1 1v2c0 .6-.4 1-1 1zM13.500 7.300a.7.700 0 1 0 0 1.400a.7.700 0 0 0 0-1.400zm-2 0a.7.700 0 1 0 0 1.400a.7.700 0 0 0 0-1.400zM15 15H1c-.6 0-1-.4-1-1v-2c0-.6.400-1 1-1h14c.6 0 1 .4 1 1v2c0 .6-.4 1-1 1zM13.500 12.300a.7.700 0 1 0 0 1.400a.7.700 0 0 0 0-1.400zm-2 0a.7.700 0 1 0 0 1.400a.7.700 0 0 0 0-1.400z"/></svg><span style="left:64.7px">受注出荷DBサーバ#2</span></div>
<div class="tr" style="top:492.60px"><svg style="left:51.7px;top:3.2px;width:8.8px;height:10.2px" viewBox="0 0 14 16"><path d="M14 2.300v1.400C14 5 10.900 6 7 6S0 5 0 3.700V2.300C0 1 3.100 0 7 0s7 1 7 2.300zM14 5.500v3.200C14 10 10.900 11 7 11S0 10 0 8.700V5.500C1.500 6.500 4.300 7 7 7s5.500-.5 7-1.500zM14 10.500v3.200C14 15 10.900 16 7 16S0 15 0 13.700v-3.200c1.500 1 4.300 1.500 7 1.500s5.500-.5 7-1.500z"/></svg><span style="left:64.7px">受注出荷Oracle</span></div>
<div class="tr" style="top:509.15px"><svg style="left:50.9px;top:3.300px;width:10.500px;height:9.200px" viewBox="0 1 16 14"><path fill-rule="evenodd" d="M15 5H1C.4 5 0 4.600 0 4V2c0-.6.400-1 1-1h14c.6 0 1 .4 1 1v2c0 .6-.4 1-1 1zM13.500 2.300a.7.700 0 1 0 0 1.400a.7.700 0 0 0 0-1.400zm-2 0a.7.700 0 1 0 0 1.400a.7.700 0 0 0 0-1.400zM15 10H1c-.6 0-1-.4-1-1V7c0-.6.400-1 1-1h14c.6 0 1 .4 1 1v2c0 .6-.4 1-1 1zM13.500 7.300a.7.700 0 1 0 0 1.400a.7.700 0 0 0 0-1.400zm-2 0a.7.700 0 1 0 0 1.400a.7.700 0 0 0 0-1.400zM15 15H1c-.6 0-1-.4-1-1v-2c0-.6.400-1 1-1h14c.6 0 1 .4 1 1v2c0 .6-.4 1-1 1zM13.500 12.300a.7.700 0 1 0 0 1.400a.7.700 0 0 0 0-1.400zm-2 0a.7.700 0 1 0 0 1.400a.7.700 0 0 0 0-1.400z"/></svg><span style="left:64.7px">受注出荷WEBサーバ#1</span></div>
<div class="tr" style="top:525.70px"><svg style="left:50.9px;top:3.300px;width:10.500px;height:9.200px" viewBox="0 1 16 14"><path fill-rule="evenodd" d="M15 5H1C.4 5 0 4.600 0 4V2c0-.6.400-1 1-1h14c.6 0 1 .4 1 1v2c0 .6-.4 1-1 1zM13.500 2.300a.7.700 0 1 0 0 1.400a.7.700 0 0 0 0-1.400zm-2 0a.7.700 0 1 0 0 1.400a.7.700 0 0 0 0-1.400zM15 10H1c-.6 0-1-.4-1-1V7c0-.6.400-1 1-1h14c.6 0 1 .4 1 1v2c0 .6-.4 1-1 1zM13.500 7.300a.7.700 0 1 0 0 1.400a.7.700 0 0 0 0-1.400zm-2 0a.7.700 0 1 0 0 1.400a.7.700 0 0 0 0-1.400zM15 15H1c-.6 0-1-.4-1-1v-2c0-.6.400-1 1-1h14c.6 0 1 .4 1 1v2c0 .6-.4 1-1 1zM13.500 12.300a.7.700 0 1 0 0 1.400a.7.700 0 0 0 0-1.400zm-2 0a.7.700 0 1 0 0 1.400a.7.700 0 0 0 0-1.400z"/></svg><span style="left:64.7px">受注出荷WEBサーバ#2</span></div>
<div id="tsplit"><i style="left:2px"></i><i style="left:4px"></i></div>
<div id="bc"><span style="left:8.800px">ルート</span><span class="q" style="left:47.200px">»</span><span style="left:63.500px">JP</span><span class="q" style="left:83.300px">»</span><span style="left:99.700px">Tokyo DC</span><span class="q" style="left:152.800px">»</span><span style="left:169px">会計システム</span><span class="q" style="left:238.500px">»</span><span class="g" style="left:255.200px">会計DBサーバ#1</span></div>
<div id="tabline"></div><div id="tab1"></div>
<div class="tb" style="left:397.0px;color:#333;font-weight:400">一覧</div>
<div class="tb" style="left:439.3px">詳細</div>
<div class="tb" style="left:472.2px">権限</div>
<div class="tb" style="left:505.4px">ワークフロー</div>
<div class="tb" style="left:580.0px">アカウント利用設定</div>
<div class="tb" style="left:685.6px">アクセスログ管理</div>
<div class="tb" style="left:780.3px">参照元</div>
<div class="btn" style="left:383.300px;width:52.700px"><span style="left:9.500px">追加</span><div class="cdk" style="left:39px;top:10.600px"></div></div>
<div class="btn" style="left:439.400px;width:40.400px"><span style="left:9.500px">削除</span></div>
<div class="btn" style="left:483.400px;width:63.200px"><span style="left:10px">その他</span><div class="cdk" style="left:48.500px;top:10.600px"></div></div>
<div class="cb" style="left:580.800px;top:194.100px"></div>
<div class="t" style="left:593px;top:189px;line-height:20px;font-size:10.400px;color:#444;font-family:'Liberation Sans','Noto Sans CJK JP',sans-serif">操作制限対象も表示する</div>
<div class="btn" style="left:894.600px;width:82.400px"><span style="left:10.500px">ダウンロード</span></div>
<div id="cnt"><b>19</b> 件中 <b>1</b> - <b>19</b> 件目</div>
<div class="cb" style="left:385.700px;top:245.600px"></div>
<div class="th" style="left:402.0px">アカウント/グループ</div>
<div class="th" style="left:562.6px">最終ログイン日時</div>
<div class="th" style="left:781.8px">種類</div>
<div class="th" style="left:896.0px">メモ</div>
<svg class="abs" style="left:546.2px;top:246.400px;width:5.600px;height:3.400px;fill:#1d4f8c" viewBox="0 0 10 6"><path d="M5 0l5 6H0z"/></svg>
<svg class="abs" style="left:767.8px;top:245.300px;width:4.600px;height:7.400px;fill:#aaa" viewBox="0 0 10 16"><path d="M5 0l5 6.500H0zM5 16l5-6.500H0z"/></svg>
<svg class="abs" style="left:876.4px;top:246.400px;width:5.600px;height:3.400px;fill:#1d4f8c" viewBox="0 0 10 6"><path d="M5 0l5 6H0z"/></svg>
<svg class="abs" style="left:966.2px;top:245.300px;width:4.600px;height:7.400px;fill:#aaa" viewBox="0 0 10 16"><path d="M5 0l5 6.500H0zM5 16l5-6.500H0z"/></svg>
<div id="hline"></div>
<div class="fi" style="left:400.600px;width:153.800px"><svg viewBox="0 0 16 16"><path d="M15.200 0H.8C.1 0-.3.800.2 1.300L6 7.100v6.400c0 .2.100.5.300.6l2.500 1.700c.5.400 1.200 0 1.200-.6V7.100l5.800-5.800c.5-.5.100-1.300-.6-1.300z"/></svg><span>～を含む</span></div>
<div class="fi" style="left:561.700px;width:213.200px"><svg viewBox="0 0 16 16"><path d="M15.200 0H.8C.1 0-.3.800.2 1.300L6 7.100v6.400c0 .2.100.5.300.6l2.500 1.700c.5.400 1.200 0 1.200-.6V7.100l5.800-5.800c.5-.5.100-1.300-.6-1.300z"/></svg><span>～を含む</span></div>
<div class="fi" style="left:781.800px;width:105.200px"><svg viewBox="0 0 16 16"><path d="M15.200 0H.8C.1 0-.3.800.2 1.300L6 7.100v6.400c0 .2.100.5.300.6l2.500 1.700c.5.400 1.200 0 1.200-.6V7.100l5.800-5.800c.5-.5.100-1.300-.6-1.300z"/></svg><div class="cdk" style="left:91px;top:11px;border-top-color:#555"></div></div>
<div class="fi" style="left:894px;width:79.800px"><svg viewBox="0 0 16 16"><path d="M15.200 0H.8C.1 0-.3.800.2 1.300L6 7.100v6.400c0 .2.100.5.300.6l2.500 1.700c.5.400 1.200 0 1.200-.6V7.100l5.800-5.800c.5-.5.100-1.300-.6-1.300z"/></svg><span>～を含む</span></div>
<div class="row o" style="top:297.80px"><div class="cb"></div><svg style="left:20.600px;top:5.600px;width:8.8px;height:10px" viewBox="0 0 14 16"><circle cx="7" cy="4" r="4"/><path d="M9.800 9h-.5c-.7.300-1.500.5-2.300.5S5.400 9.300 4.700 9h-.5C1.900 9 0 10.900 0 13.200v1.300c0 .8.700 1.500 1.500 1.500h11c.8 0 1.500-.7 1.500-1.500v-1.300C14 10.900 12.100 9 9.800 9z"/></svg><span class="lk" style="letter-spacing:0.49px">Administrator</span><span class="dt">2020/08/21 03:35</span><span class="ty">アカウント</span><span class="mm">－</span></div>
<div class="row" style="top:319.45px"><div class="cb"></div><svg style="left:20.600px;top:5.600px;width:8.8px;height:10px" viewBox="0 0 14 16"><circle cx="7" cy="4" r="4"/><path d="M9.800 9h-.5c-.7.300-1.500.5-2.300.5S5.400 9.300 4.700 9h-.5C1.900 9 0 10.900 0 13.200v1.300c0 .8.700 1.500 1.500 1.500h11c.8 0 1.500-.7 1.500-1.500v-1.300C14 10.900 12.100 9 9.800 9z"/></svg><span class="lk" style="letter-spacing:0.20px">idopadmin</span><span class="dt">2020/08/21 08:30</span><span class="ty">アカウント</span><span class="mm">－</span></div>
<div class="row o" style="top:341.10px"><div class="cb"></div><svg style="left:20.600px;top:5.600px;width:8.8px;height:10px" viewBox="0 0 14 16"><circle cx="7" cy="4" r="4"/><path d="M9.800 9h-.5c-.7.300-1.500.5-2.300.5S5.400 9.300 4.700 9h-.5C1.900 9 0 10.900 0 13.200v1.300c0 .8.700 1.500 1.500 1.500h11c.8 0 1.500-.7 1.500-1.500v-1.300C14 10.900 12.100 9 9.800 9z"/></svg><span class="lk" style="letter-spacing:0.14px">sqladmin</span><span class="dt">2020/08/15 21:05</span><span class="ty">アカウント</span><span class="mm">－</span></div>
<div class="row" style="top:362.75px"><div class="cb"></div><svg style="left:20.600px;top:5.600px;width:8.8px;height:10px" viewBox="0 0 14 16"><circle cx="7" cy="4" r="4"/><path d="M9.800 9h-.5c-.7.300-1.500.5-2.300.5S5.400 9.300 4.700 9h-.5C1.900 9 0 10.900 0 13.200v1.300c0 .8.700 1.500 1.500 1.500h11c.8 0 1.500-.7 1.500-1.500v-1.300C14 10.900 12.100 9 9.800 9z"/></svg><span class="lk" style="letter-spacing:0.30px">sqlservice</span><span class="ds">－</span><span class="ty">アカウント</span><span class="mm">－</span></div>
<div class="row o" style="top:384.40px"><svg style="left:19.6px;top:5.8px;width:12.6px;height:9.8px" viewBox="0 0 20 16"><circle cx="3" cy="4.800" r="2"/><circle cx="17" cy="4.800" r="2"/><path d="M18 7.800h-2c-.6 0-1.100.2-1.400.6 1.200.7 2.100 1.900 2.300 3.400H19c.6 0 1-.4 1-1v-1c0-1.100-.9-2-2-2zM2 7.800h2c.6 0 1.100.2 1.400.6-1.200.7-2.100 1.900-2.300 3.400H1c-.6 0-1-.4-1-1v-1c0-1.100.9-2 2-2z"/><circle cx="10" cy="5.300" r="3.500"/><path d="M12.400 9.800h-.3c-.6.300-1.400.5-2.100.5s-1.500-.2-2.100-.5h-.3C5.600 9.800 4 11.400 4 13.400v.9c0 .8.700 1.500 1.500 1.500h9c.8 0 1.500-.7 1.500-1.500v-.9c0-2-1.600-3.600-3.600-3.600z"/></svg><span class="lk" style="letter-spacing:0.52px">Administrators</span><span class="ds">－</span><span class="ty">アカウントグループ</span><span class="mm">－</span></div>
<div class="row" style="top:406.05px"><svg style="left:19.6px;top:5.8px;width:12.6px;height:9.8px" viewBox="0 0 20 16"><circle cx="3" cy="4.800" r="2"/><circle cx="17" cy="4.800" r="2"/><path d="M18 7.800h-2c-.6 0-1.100.2-1.400.6 1.200.7 2.100 1.900 2.300 3.400H19c.6 0 1-.4 1-1v-1c0-1.100-.9-2-2-2zM2 7.800h2c.6 0 1.100.2 1.400.6-1.200.7-2.100 1.900-2.300 3.400H1c-.6 0-1-.4-1-1v-1c0-1.100.9-2 2-2z"/><circle cx="10" cy="5.300" r="3.500"/><path d="M12.400 9.800h-.3c-.6.300-1.400.5-2.100.5s-1.500-.2-2.100-.5h-.3C5.600 9.800 4 11.400 4 13.400v.9c0 .8.700 1.500 1.500 1.500h9c.8 0 1.500-.7 1.500-1.500v-.9c0-2-1.600-3.600-3.600-3.600z"/></svg><span class="lk" style="letter-spacing:0.20px">Backup Operators</span><span class="ds">－</span><span class="ty">アカウントグループ</span><span class="mm">－</span></div>
<div class="row o" style="top:427.70px"><svg style="left:19.6px;top:5.8px;width:12.6px;height:9.8px" viewBox="0 0 20 16"><circle cx="3" cy="4.800" r="2"/><circle cx="17" cy="4.800" r="2"/><path d="M18 7.800h-2c-.6 0-1.100.2-1.400.6 1.200.7 2.100 1.900 2.300 3.400H19c.6 0 1-.4 1-1v-1c0-1.100-.9-2-2-2zM2 7.800h2c.6 0 1.100.2 1.400.6-1.200.7-2.100 1.900-2.300 3.400H1c-.6 0-1-.4-1-1v-1c0-1.100.9-2 2-2z"/><circle cx="10" cy="5.300" r="3.500"/><path d="M12.400 9.800h-.3c-.6.300-1.400.5-2.100.5s-1.500-.2-2.100-.5h-.3C5.600 9.800 4 11.400 4 13.400v.9c0 .8.700 1.500 1.500 1.500h9c.8 0 1.500-.7 1.500-1.500v-.9c0-2-1.600-3.600-3.600-3.600z"/></svg><span class="lk" style="letter-spacing:0.34px">Certificate Service DCOM</span><span class="ds">－</span><span class="ty">アカウントグループ</span><span class="mm">－</span></div>
<div class="row" style="top:449.35px"><svg style="left:19.6px;top:5.8px;width:12.6px;height:9.8px" viewBox="0 0 20 16"><circle cx="3" cy="4.800" r="2"/><circle cx="17" cy="4.800" r="2"/><path d="M18 7.800h-2c-.6 0-1.100.2-1.400.6 1.200.7 2.100 1.900 2.300 3.400H19c.6 0 1-.4 1-1v-1c0-1.100-.9-2-2-2zM2 7.800h2c.6 0 1.100.2 1.400.6-1.200.7-2.100 1.900-2.300 3.400H1c-.6 0-1-.4-1-1v-1c0-1.100.9-2 2-2z"/><circle cx="10" cy="5.300" r="3.500"/><path d="M12.400 9.800h-.3c-.6.300-1.400.5-2.100.5s-1.500-.2-2.100-.5h-.3C5.600 9.800 4 11.400 4 13.400v.9c0 .8.700 1.500 1.500 1.500h9c.8 0 1.500-.7 1.500-1.500v-.9c0-2-1.600-3.600-3.600-3.600z"/></svg><span class="lk" style="letter-spacing:0.43px">Cryptographic Operators</span><span class="ds">－</span><span class="ty">アカウントグループ</span><span class="mm">－</span></div>
<div class="row o" style="top:471.00px"><svg style="left:19.6px;top:5.8px;width:12.6px;height:9.8px" viewBox="0 0 20 16"><circle cx="3" cy="4.800" r="2"/><circle cx="17" cy="4.800" r="2"/><path d="M18 7.800h-2c-.6 0-1.100.2-1.400.6 1.200.7 2.100 1.900 2.300 3.400H19c.6 0 1-.4 1-1v-1c0-1.100-.9-2-2-2zM2 7.800h2c.6 0 1.100.2 1.400.6-1.200.7-2.100 1.900-2.300 3.400H1c-.6 0-1-.4-1-1v-1c0-1.100.9-2 2-2z"/><circle cx="10" cy="5.300" r="3.500"/><path d="M12.400 9.800h-.3c-.6.300-1.400.5-2.100.5s-1.500-.2-2.100-.5h-.3C5.600 9.800 4 11.400 4 13.400v.9c0 .8.700 1.500 1.500 1.500h9c.8 0 1.500-.7 1.500-1.500v-.9c0-2-1.600-3.600-3.600-3.600z"/></svg><span class="lk" style="letter-spacing:0.35px">Distributed COM Users</span><span class="ds">－</span><span class="ty">アカウントグループ</span><span class="mm">－</span></div>
<div class="row" style="top:492.65px"><svg style="left:19.6px;top:5.8px;width:12.6px;height:9.8px" viewBox="0 0 20 16"><circle cx="3" cy="4.800" r="2"/><circle cx="17" cy="4.800" r="2"/><path d="M18 7.800h-2c-.6 0-1.100.2-1.400.6 1.200.7 2.100 1.900 2.300 3.400H19c.6 0 1-.4 1-1v-1c0-1.100-.9-2-2-2zM2 7.800h2c.6 0 1.100.2 1.400.6-1.200.7-2.100 1.900-2.300 3.400H1c-.6 0-1-.4-1-1v-1c0-1.100.9-2 2-2z"/><circle cx="10" cy="5.300" r="3.500"/><path d="M12.400 9.800h-.3c-.6.300-1.400.5-2.100.5s-1.500-.2-2.100-.5h-.3C5.600 9.800 4 11.400 4 13.400v.9c0 .8.700 1.500 1.500 1.500h9c.8 0 1.500-.7 1.500-1.500v-.9c0-2-1.600-3.600-3.600-3.600z"/></svg><span class="lk" style="letter-spacing:0.08px">Event Log Readers</span><span class="ds">－</span><span class="ty">アカウントグループ</span><span class="mm">－</span></div>
<div class="row o" style="top:514.30px"><svg style="left:19.6px;top:5.8px;width:12.6px;height:9.8px" viewBox="0 0 20 16"><circle cx="3" cy="4.800" r="2"/><circle cx="17" cy="4.800" r="2"/><path d="M18 7.800h-2c-.6 0-1.100.2-1.400.6 1.200.7 2.100 1.900 2.300 3.400H19c.6 0 1-.4 1-1v-1c0-1.100-.9-2-2-2zM2 7.800h2c.6 0 1.100.2 1.400.6-1.200.7-2.100 1.900-2.300 3.400H1c-.6 0-1-.4-1-1v-1c0-1.100.9-2 2-2z"/><circle cx="10" cy="5.300" r="3.500"/><path d="M12.400 9.800h-.3c-.6.300-1.400.5-2.100.5s-1.500-.2-2.100-.5h-.3C5.600 9.800 4 11.400 4 13.400v.9c0 .8.700 1.500 1.500 1.500h9c.8 0 1.500-.7 1.500-1.500v-.9c0-2-1.600-3.600-3.600-3.600z"/></svg><span class="lk" style="letter-spacing:0.13px">Guests</span><span class="ds">－</span><span class="ty">アカウントグループ</span><span class="mm">－</span></div>
<div class="row" style="top:535.95px"><svg style="left:19.6px;top:5.8px;width:12.6px;height:9.8px" viewBox="0 0 20 16"><circle cx="3" cy="4.800" r="2"/><circle cx="17" cy="4.800" r="2"/><path d="M18 7.800h-2c-.6 0-1.100.2-1.400.6 1.200.7 2.100 1.900 2.300 3.400H19c.6 0 1-.4 1-1v-1c0-1.100-.9-2-2-2zM2 7.800h2c.6 0 1.100.2 1.400.6-1.200.7-2.100 1.900-2.300 3.400H1c-.6 0-1-.4-1-1v-1c0-1.100.9-2 2-2z"/><circle cx="10" cy="5.300" r="3.500"/><path d="M12.400 9.800h-.3c-.6.300-1.400.5-2.100.5s-1.500-.2-2.100-.5h-.3C5.600 9.800 4 11.400 4 13.400v.9c0 .8.700 1.500 1.500 1.500h9c.8 0 1.500-.7 1.500-1.500v-.9c0-2-1.600-3.600-3.600-3.600z"/></svg><span class="lk" style="letter-spacing:0.47px">Hyper-V Administrators</span><span class="ds">－</span><span class="ty">アカウントグループ</span><span class="mm">－</span></div>
<div id="frame"></div>
</body>
</html>
